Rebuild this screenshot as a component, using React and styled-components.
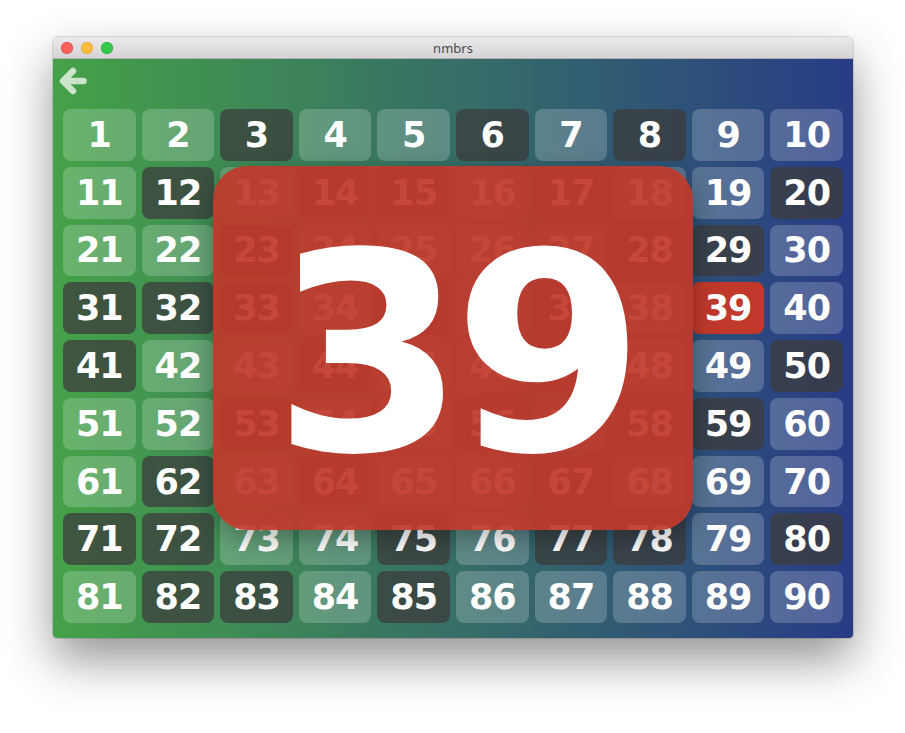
import React from 'react';
import styled, { createGlobalStyle } from 'styled-components';

const DARK = new Set([
  3, 6, 8, 12, 14, 15, 17, 20, 23, 28, 29, 31, 32, 33, 35, 37, 41, 44, 47, 50,
  53, 56, 58, 59, 62, 64, 67, 71, 72, 75, 77, 78, 80, 82, 83, 85,
]);
const SELECTED = 39;
const numbers = Array.from({ length: 90 }, (_, i) => i + 1);

const tileKind = (n) => (n === SELECTED ? 'selected' : DARK.has(n) ? 'dark' : 'light');

const App = () => {
  return (
    <>
      <GlobalStyle />
      <Desktop>
        <Window>
          <TitleBar>
            <Lights>
              <Light color="#fc605b" border="#de4a44" />
              <Light color="#fdbc40" border="#dea236" />
              <Light color="#34c84a" border="#27aa35" />
            </Lights>
            <Title>nmbrs</Title>
          </TitleBar>
          <Content>
            <Header>
              <BackButton>
                <svg width="28" height="28" viewBox="0 0 28 28">
                  <path
                    d="M24.5 14H4.5M14 4L4 14L14 24"
                    fill="none"
                    stroke="currentColor"
                    strokeWidth="6.5"
                    strokeLinecap="round"
                    strokeLinejoin="round"
                  />
                </svg>
              </BackButton>
            </Header>
            <Board>
              <Grid>
                {numbers.map((n) => (
                  <Tile key={n} kind={tileKind(n)}>{n}</Tile>
                ))}
              </Grid>
              <Overlay>
                <BigNumber>{SELECTED}</BigNumber>
              </Overlay>
            </Board>
          </Content>
        </Window>
      </Desktop>
    </>
  );
};

const GlobalStyle = createGlobalStyle`
  html, body {
    margin: 0;
    padding: 0;
    background: #ffffff;
  }
`;

const Desktop = styled.div`
  display: flex;
  align-items: flex-start;
  width: 905px;
  height: 733px;
  padding: 37px 0 0 53px;
  box-sizing: border-box;
`;

const Window = styled.div`
  display: flex;
  flex-direction: column;
  width: 800px;
  height: 601px;
  border-radius: 5px 5px 4px 4px;
  overflow: hidden;
  box-shadow: 0 22px 48px rgba(0, 0, 0, 0.42), 0 0 0 1px rgba(0, 0, 0, 0.12);
`;

const TitleBar = styled.div`
  position: relative;
  display: flex;
  align-items: center;
  justify-content: center;
  height: 22px;
  flex-shrink: 0;
  background: linear-gradient(to bottom, #ebe9eb, #d5d3d5);
  border-bottom: 1px solid #b1afb1;
  box-sizing: border-box;
`;

const Lights = styled.div`
  position: absolute;
  left: 8px;
  top: 5px;
  display: flex;
  gap: 8px;
`;

const Light = styled.span`
  width: 12px;
  height: 12px;
  border-radius: 50%;
  background: ${(p) => p.color};
  box-shadow: inset 0 0 0 0.5px ${(p) => p.border};
`;

const Title = styled.div`
  font-family: 'Noto Sans', 'Liberation Sans', sans-serif;
  font-size: 13px;
  color: #4a4a4a;
  line-height: 22px;
`;

const Content = styled.div`
  flex: 1;
  display: flex;
  flex-direction: column;
  background: linear-gradient(to right, #45a247, #283c86);
`;

const Header = styled.div`
  height: 50px;
  flex-shrink: 0;
  padding: 8px 6px 0;
  box-sizing: border-box;
`;

const BackButton = styled.div`
  display: flex;
  width: 28px;
  height: 28px;
  color: rgba(255, 255, 255, 0.72);
  cursor: pointer;
`;

const Board = styled.div`
  position: relative;
  flex: 1;
  display: flex;
  padding: 0 10px 15px;
`;

const Grid = styled.div`
  flex: 1;
  display: grid;
  grid-template-columns: repeat(10, 1fr);
  grid-template-rows: repeat(9, 1fr);
  gap: 6px;
`;

const tileBg = {
  light: 'rgba(255, 255, 255, 0.2)',
  dark: 'rgba(60, 60, 60, 0.75)',
  selected: '#c0392b',
};

const Tile = styled.div`
  display: flex;
  align-items: center;
  justify-content: center;
  border-radius: 8px;
  background: ${(p) => tileBg[p.kind]};
  color: #ffffff;
  font-family: 'DejaVu Sans', 'Liberation Sans', sans-serif;
  font-weight: 700;
  font-size: 35px;
  letter-spacing: -1px;
`;

const Overlay = styled.div`
  position: absolute;
  left: 160px;
  top: 57px;
  width: 480px;
  height: 364px;
  display: flex;
  align-items: center;
  justify-content: center;
  border-radius: 34px;
  background: rgba(192, 57, 43, 0.93);
  box-shadow: 0 8px 26px rgba(0, 0, 0, 0.3);
`;

const BigNumber = styled.div`
  font-family: 'DejaVu Sans', 'Liberation Sans', sans-serif;
  font-weight: 700;
  font-size: 276px;
  line-height: 1;
  letter-spacing: -12px;
  color: #ffffff;
  margin-top: 13px;
`;

export default App;
